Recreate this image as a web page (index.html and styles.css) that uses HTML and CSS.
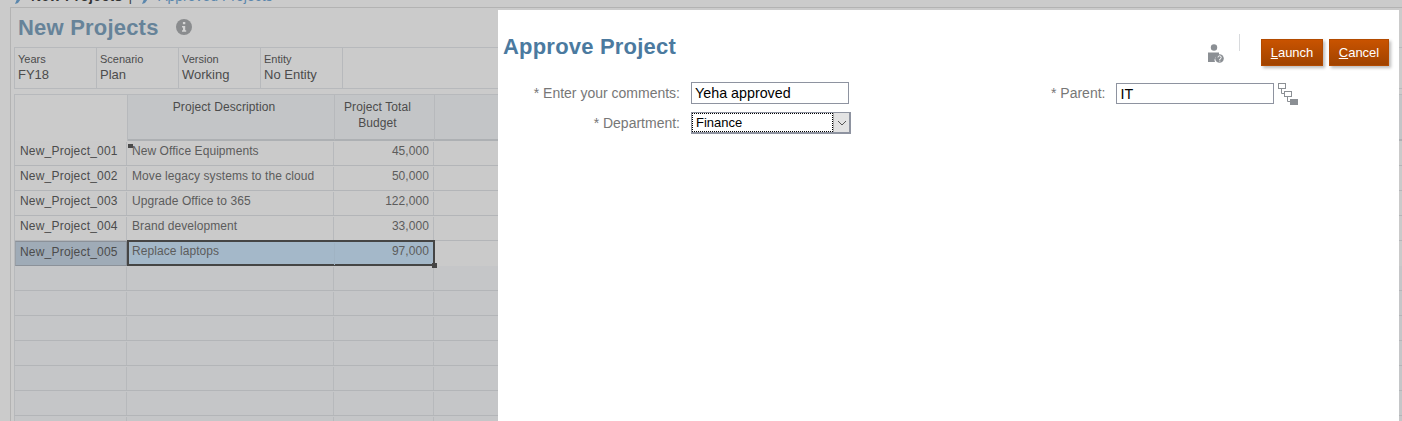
FILE: index.html
```html
<!DOCTYPE html>
<html lang="en">
<head>
    <meta charset="UTF-8">
    <meta name="viewport" content="width=device-width, initial-scale=1.0">
    <title>Approve Project</title>
    <link rel="stylesheet" href="styles.css">
</head>
<body>
    <div class="tabs">
        <div class="tabs-inner">
            <svg class="tab-icon" width="8" height="16" viewBox="0 0 8 16"><path d="M0 16 L2 11 L7 6 L8 8 L3 15 Z" fill="#5b87ad"/></svg>
            <span class="tab-on">New Projects</span>
            <span class="tab-sep">|</span>
            <svg class="tab-icon" width="8" height="16" viewBox="0 0 8 16"><path d="M0 16 L2 11 L7 6 L8 8 L3 15 Z" fill="#5b87ad"/></svg>
            <span class="tab-off">Approved Projects</span>
        </div>
    </div>

    <div class="panel">
        <div class="title-row">
            <h1>New Projects</h1>
            <svg class="info" width="16" height="16" viewBox="0 0 16 16">
                <circle cx="8" cy="8" r="8" fill="#8a8c8e"/>
                <rect x="6.9" y="3" width="2.4" height="2.2" fill="#d4d4d4"/>
                <path d="M6 7 H9.2 V11.2 H10.2 V12.8 H6 V11.2 H7 V8.4 H6 Z" fill="#d4d4d4"/>
            </svg>
        </div>

        <div class="pov">
            <div class="pov-cell"><span>Years</span><b>FY18</b></div>
            <div class="pov-cell"><span>Scenario</span><b>Plan</b></div>
            <div class="pov-cell"><span>Version</span><b>Working</b></div>
            <div class="pov-cell"><span>Entity</span><b>No Entity</b></div>
        </div>

        <div class="grid">
            <div class="head">
                <div class="hcell blank"></div>
                <div class="hcell desc">Project Description</div>
                <div class="hcell total">Project Total<br>Budget</div>
                <div class="hcell rest"></div>
            </div>

            <div class="row">
                <div class="cell name">New_Project_001</div>
                <div class="cell desc"><i class="handle-top"></i>New Office Equipments</div>
                <div class="cell total">45,000</div>
                <div class="cell rest"></div>
            </div>
            <div class="row">
                <div class="cell name">New_Project_002</div>
                <div class="cell desc">Move legacy systems to the cloud</div>
                <div class="cell total">50,000</div>
                <div class="cell rest"></div>
            </div>
            <div class="row">
                <div class="cell name">New_Project_003</div>
                <div class="cell desc">Upgrade Office to 365</div>
                <div class="cell total">122,000</div>
                <div class="cell rest"></div>
            </div>
            <div class="row">
                <div class="cell name">New_Project_004</div>
                <div class="cell desc">Brand development</div>
                <div class="cell total">33,000</div>
                <div class="cell rest"></div>
            </div>
            <div class="row selected">
                <div class="cell name">New_Project_005</div>
                <div class="sel-box">
                    <div class="cell desc">Replace laptops</div>
                    <div class="cell total">97,000</div>
                    <i class="handle"></i>
                </div>
                <div class="cell rest"></div>
            </div>

            <div class="row empty"><div class="cell name"></div><div class="cell desc"></div><div class="cell total"></div><div class="cell rest"></div></div>
            <div class="row empty"><div class="cell name"></div><div class="cell desc"></div><div class="cell total"></div><div class="cell rest"></div></div>
            <div class="row empty"><div class="cell name"></div><div class="cell desc"></div><div class="cell total"></div><div class="cell rest"></div></div>
            <div class="row empty"><div class="cell name"></div><div class="cell desc"></div><div class="cell total"></div><div class="cell rest"></div></div>
            <div class="row empty"><div class="cell name"></div><div class="cell desc"></div><div class="cell total"></div><div class="cell rest"></div></div>
            <div class="row empty"><div class="cell name"></div><div class="cell desc"></div><div class="cell total"></div><div class="cell rest"></div></div>
            <div class="row empty"><div class="cell name"></div><div class="cell desc"></div><div class="cell total"></div><div class="cell rest"></div></div>
        </div>
    </div>

    <div class="dialog">
        <div class="dlg-head">
            <h2>Approve Project</h2>
            <div class="dlg-tools">
                <svg class="user-icon" width="16" height="20" viewBox="0 0 16 20">
                    <circle cx="6" cy="3.5" r="3.2" fill="#8b8f94"/>
                    <path d="M0 8.5 H11 V11 A5 5 0 0 0 7 18 H0 Z" fill="#8b8f94"/>
                    <circle cx="11.5" cy="14.5" r="4.3" fill="#8b8f94"/>
                    <path d="M10 13.4 A1.6 1.6 0 1 1 11.8 15 V16" stroke="#fff" stroke-width="1" fill="none"/>
                    <rect x="11.3" y="16.6" width="1" height="1" fill="#fff"/>
                </svg>
                <span class="divider"></span>
                <button class="btn launch"><u>L</u>aunch</button>
                <button class="btn cancel"><u>C</u>ancel</button>
            </div>
        </div>

        <div class="dlg-form">
            <div class="form-left">
                <label>* Enter your comments:</label>
                <input type="text" class="txt" value="Yeha approved">
                <label>* Department:</label>
                <div class="sel">
                    <span class="sel-val">Finance</span>
                    <span class="sel-btn">
                        <svg width="10" height="6" viewBox="0 0 10 6"><path d="M1 1 L5 5 L9 1" stroke="#555" fill="none"/></svg>
                    </span>
                </div>
            </div>
            <div class="form-right">
                <label>* Parent:</label>
                <input type="text" class="txt" value="IT">
                <svg class="tree" width="21" height="23" viewBox="0 0 21 23">
                    <rect x="0.5" y="0.5" width="7" height="5" fill="#fff" stroke="#8b8f94"/>
                    <rect x="6.5" y="8.5" width="7" height="5" fill="#fff" stroke="#8b8f94"/>
                    <rect x="12" y="16" width="8" height="6" fill="#8b8f94"/>
                    <path d="M3.5 6 V10.5 H6 M9.5 14 V18.5 H12" stroke="#8b8f94" fill="none"/>
                </svg>
            </div>
        </div>
    </div>
</body>
</html>
```

FILE: styles.css
```css
html, body {
    height: 100%;
}

body {
    margin: 0;
    overflow: hidden;
    background-color: #cbcbcb;
    font-family: "Liberation Sans", Arial, sans-serif;
    color: #4c4c4c;
}

.tabs {
    height: 7px;
    overflow: hidden;
}

.tabs-inner {
    display: flex;
    align-items: center;
    height: 16px;
    margin-top: -12px;
    padding-left: 15px;
    font-size: 14px;
}

.tab-icon {
    margin-right: 8px;
}

.tab-on {
    font-weight: bold;
    color: #333;
    letter-spacing: .3px;
}

.tab-sep {
    margin: 0 10px 0 6px;
    color: #444;
}

.tab-off {
    color: #5b87ad;
}

.panel {
    margin-left: 10px;
    height: 420px;
    padding-left: 3px;
    border-top: 1px solid #b3b3b3;
    border-left: 1px solid #b3b3b3;
}

.title-row {
    display: flex;
    align-items: center;
    height: 39px;
    padding-left: 4px;
}

h1 {
    margin: 0;
    font-size: 22px;
    letter-spacing: .2px;
    color: #668399;
}

.info {
    margin-left: 17px;
    margin-top: -1px;
}

.pov {
    display: flex;
    height: 40px;
    border-top: 1px solid #b7b9bc;
    border-bottom: 1px solid #b7b9bc;
    border-left: 1px solid #b7b9bc;
}

.pov-cell {
    display: flex;
    flex-direction: column;
    width: 78px;
    padding: 4px 0 0 3px;
    border-right: 1px solid #b7b9bc;
}

.pov-cell span {
    font-size: 11px;
    line-height: 14px;
}

.pov-cell b {
    font-size: 13px;
    font-weight: normal;
    line-height: 17px;
}

.grid {
    margin-top: 5px;
    background-color: #c5c6c8;
}

.head {
    display: flex;
    height: 46px;
    border-top: 1px solid #b7b9bc;
    border-left: 1px solid #b7b9bc;
}

.hcell {
    padding-top: 4px;
    font-size: 12px;
    line-height: 16px;
    letter-spacing: .1px;
    text-align: center;
    background-color: #c3c5c7;
    border-right: 1px solid #b7b9bc;
    border-bottom: 2px solid #adb0b3;
    box-sizing: border-box;
}

.hcell.blank {
    width: 113px;
    background-color: #cbcbcb;
    border-bottom: none;
}

.hcell.desc {
    width: 207px;
    padding-right: 14px;
}

.hcell.total {
    width: 100px;
    padding-right: 14px;
}

.hcell.rest {
    flex: 1;
    border-right: none;
}

.row {
    display: flex;
    height: 25px;
    box-sizing: border-box;
    border-bottom: 1px solid #b3b5b8;
    border-left: 1px solid #b7b9bc;
    background-color: #cacaca;
    font-size: 12px;
}

.row.empty {
    background-color: #c5c6c8;
}

.cell {
    box-sizing: border-box;
    height: 23px;
    margin-top: 1px;
    padding: 1px 4px 0;
    line-height: 17px;
    letter-spacing: .07px;
    border-right: 1px solid #b7b9bc;
}

.cell.name {
    width: 112px;
    padding-left: 5px;
    letter-spacing: .2px;
}

.cell.desc {
    position: relative;
    width: 207px;
    padding-left: 5px;
    color: #5c5c5c;
}

.cell.total {
    width: 100px;
    text-align: right;
    color: #5c5c5c;
}

.cell.rest {
    flex: 1;
    border-right: none;
}

.handle-top {
    position: absolute;
    left: 1px;
    top: 2px;
    width: 5px;
    height: 4px;
    background-color: #4a4a4a;
}

.row.selected {
    border-bottom: none;
}

.row.selected .cell.name {
    height: 25px;
    margin-top: 0;
    padding-top: 2px;
    padding-left: 4px;
    background-color: #9fabb7;
    border: 1px solid #8b9199;
    border-left-color: #9aa0a7;
}

.sel-box {
    position: relative;
    display: flex;
    box-sizing: border-box;
    width: 308px;
    height: 26px;
    margin-top: -1px;
    background-color: #a4b8c9;
    border: 2px solid #454545;
}

.sel-box .cell {
    height: 22px;
    padding-top: 0;
    border-right: none;
}

.sel-box .cell.desc {
    width: 205px;
    padding-left: 3px;
}

.sel-box .cell.total {
    width: 99px;
    padding-right: 4px;
    border-left: 1px solid #a0b3c3;
}

.handle {
    position: absolute;
    right: -4px;
    bottom: -4px;
    width: 5px;
    height: 5px;
    background-color: #454545;
}

.dialog {
    position: absolute;
    left: 498px;
    top: 10px;
    bottom: 0;
    width: 901px;
    background-color: #fff;
}

.dlg-head {
    display: flex;
    justify-content: space-between;
    height: 72px;
    padding-left: 5px;
}

h2 {
    margin: 24px 0 0;
    font-size: 22px;
    line-height: 26px;
    letter-spacing: .2px;
    color: #4b7a9f;
}

.dlg-tools {
    display: flex;
    align-items: flex-start;
    padding-top: 24px;
    padding-right: 10px;
}

.user-icon {
    margin-top: 10px;
}

.divider {
    width: 1px;
    height: 17px;
    margin: 0 21px 0 15px;
    background-color: #d8dadd;
}

.btn {
    height: 27px;
    padding: 0;
    margin: 5px 0 0 6px;
    font-family: inherit;
    font-size: 13px;
    color: #fff;
    border: 1px solid #b24a00;
    background: linear-gradient(#c95300, #a04300);
    box-shadow: 2px 2px 3px #bbb;
}

.btn.launch {
    width: 62px;
    margin-left: 0;
}

.btn.cancel {
    width: 60px;
}

.dlg-form {
    display: flex;
}

.form-left {
    display: grid;
    grid-template-columns: 182px 160px;
    grid-auto-rows: 22px;
    row-gap: 8px;
    column-gap: 11px;
    align-items: center;
}

.form-right {
    display: flex;
    align-items: flex-start;
    margin-left: 200px;
    padding-top: 1px;
}

label {
    font-size: 14px;
    color: #777;
    text-align: right;
}

.form-right label {
    line-height: 21px;
    margin-right: 11px;
}

.txt {
    box-sizing: border-box;
    width: 158px;
    height: 22px;
    padding: 0 3px;
    font-family: inherit;
    font-size: 14.3px;
    color: #000;
    border: 1px solid #8e93a0;
    outline: none;
}

.form-right .txt {
    height: 21px;
}

.tree {
    margin-left: 4px;
}

.sel {
    display: flex;
    box-sizing: border-box;
    width: 160px;
    height: 22px;
    border: 1px solid #8e93a0;
    border-right-width: 2px;
    border-bottom-width: 2px;
    font-size: 13px;
    color: #000;
}

.sel-val {
    flex: 1;
    padding-left: 4px;
    line-height: 20px;
    outline: 1px dotted #000;
    outline-offset: -1px;
}

.sel-btn {
    display: flex;
    align-items: center;
    justify-content: center;
    width: 15px;
    background-color: #e3e3e3;
    border-left: 1px solid #aaa;
}
```
